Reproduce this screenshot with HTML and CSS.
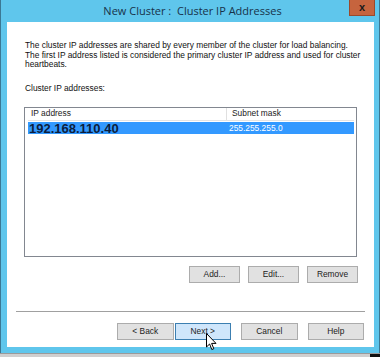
FILE: index.html
```html
<!DOCTYPE html>
<html>
<head>
    <link rel="stylesheet" href="styles.css">
</head>
<body>

<div class="window">
    <div class="titlebar">
        <span class="title">New Cluster :&nbsp; Cluster IP Addresses</span>
        <div class="close">x</div>
    </div>
    <div class="client">
        <p class="intro">The cluster IP addresses are shared by every member of the cluster for load balancing.<br>
            The first IP address listed is considered the primary cluster IP address and used for cluster<br>
            heartbeats.</p>
        <p class="label">Cluster IP addresses:</p>

        <div class="listbox">
            <div class="list-head">
                <div class="col-ip">IP address</div>
                <div class="col-mask">Subnet mask</div>
            </div>
            <div class="list-row selected">
                <div class="col-ip big-ip">192.168.110.40</div>
                <div class="col-mask">255.255.255.0</div>
            </div>
        </div>

        <div class="list-buttons">
            <button class="btn">Add...</button>
            <button class="btn">Edit...</button>
            <button class="btn">Remove</button>
        </div>

        <div class="separator"></div>

        <div class="nav-buttons">
            <button class="btn">&lt; Back</button>
            <button class="btn btn-hot">Next &gt;</button>
            <button class="btn btn-cancel">Cancel</button>
            <button class="btn">Help</button>
        </div>

        <!-- mouse pointer hovering Next -->
        <svg class="cursor" width="12" height="18" viewBox="0 0 12 18">
            <path d="M0.5 0.5 L0.5 14 L3.6 11 L5.8 16.5 L7.8 15.7 L5.6 10.4 L10 10.4 Z" fill="#fff" stroke="#000" stroke-width="1"/>
        </svg>
    </div>
</div>
<div class="desk-strip"></div>

</body>
</html>
```

FILE: styles.css
```css
body {
    margin: 0;
    width: 380px;
    height: 357px;
    overflow: hidden;
    background-color: #d8d8d8;
    font-family: "Liberation Sans", Arial, sans-serif;
}

.window {
    box-sizing: border-box;
    width: 380px;
    height: 353px;
    border-left: 1px solid #3b7894;
    border-right: 1px solid #3b7894;
    background-color: #5fc6ec;
    padding: 0 5px 6px 6px;
    display: flex;
    flex-direction: column;
}

.titlebar {
    height: 22px;
    flex: none;
    position: relative;
    display: flex;
    justify-content: center;
    align-items: center;
}

.title {
    font-family: "Open Sans", "Noto Sans", sans-serif;
    font-size: 11px;
    color: #17324a;
    margin-left: 4px;
    margin-top: -1px;
}

.close {
    position: absolute;
    right: -1px;
    top: 0;
    width: 26px;
    height: 16px;
    background-color: #c6643e;
    border: 1px solid #9a4a2c;
    border-top: none;
    box-sizing: border-box;
    color: #1a1a1a;
    font-weight: bold;
    font-size: 11px;
    text-align: center;
    line-height: 14px;
}

.client {
    flex: 1;
    background-color: #fff;
    position: relative;
    padding: 0 9px 0 9px;
    display: flex;
    flex-direction: column;
}

.intro {
    margin: 19px 0 0 9px;
    font-size: 8.4px;
    line-height: 9.5px;
    color: #111;
    white-space: nowrap;
}

.label {
    margin: 13px 0 0 9px;
    font-size: 8.4px;
    line-height: 10px;
    color: #111;
}

.listbox {
    margin: 14px 0 0 8px;
    width: 333px;
    height: 150px;
    box-sizing: border-box;
    border: 1px solid #828790;
    padding: 0 2px 0 3px;
}

.list-head, .list-row {
    display: flex;
    font-size: 8.4px;
}

.list-head {
    height: 12px;
    line-height: 11px;
    color: #222;
    border-bottom: 1px solid #e4e4e4;
}

.list-head .col-ip {
    border-right: 1px solid #e0e0e0;
}

.col-ip {
    width: 195px;
    padding-left: 3px;
}

.col-mask {
    padding-left: 5px;
}

.list-row {
    height: 12px;
    margin-top: 1px;
}

.selected {
    background-color: #3399ff;
    color: #fff;
    line-height: 12px;
}

.big-ip {
    font-size: 13px;
    font-weight: bold;
    color: #0b1d3d;
    padding-left: 1px;
    line-height: 13px;
}

.btn {
    box-sizing: border-box;
    height: 17px;
    padding: 0;
    border: 1px solid #acacac;
    background-color: #e1e1e1;
    font-family: "Liberation Sans", Arial, sans-serif;
    font-size: 8.4px;
    color: #222;
}

.list-buttons {
    display: flex;
    gap: 8px;
    margin: 9px 0 0 173px;
}

.list-buttons .btn {
    width: 51px;
}

.separator {
    margin: 28px 0 0 0;
    height: 1px;
    background-color: #a0a0a0;
}

.nav-buttons {
    display: flex;
    margin: 11px 0 0 101px;
}

.nav-buttons .btn {
    width: 57px;
    margin-right: 1px;
}

.nav-buttons .btn-cancel {
    margin-left: 9px;
    margin-right: 10px;
}

.btn-hot {
    background-color: #cfe6fb;
    border-color: #3c7fb1;
}

.cursor {
    position: absolute;
    left: 199px;
    top: 311px;
}

.desk-strip {
    height: 4px;
    background: linear-gradient(to right, #cfcfcf 0, #cfcfcf 370px, #111 370px);
    border-top: 1px solid #9a9a9a;
}
```
